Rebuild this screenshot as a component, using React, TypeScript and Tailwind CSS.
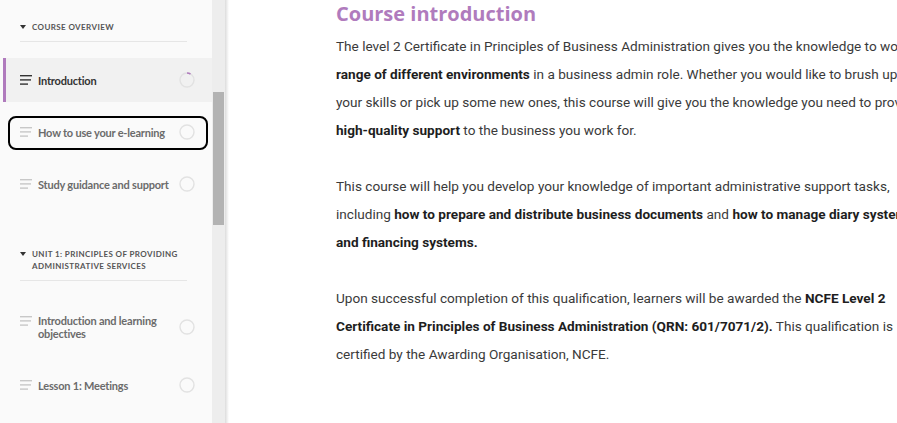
import React from "react";

type Lesson = { title: string[]; active?: boolean; focused?: boolean };

const MenuIcon = ({ active }: { active?: boolean }) => (
  <svg width="12" height="10" viewBox="0 0 12 10" className="shrink-0">
    <g fill={active ? "#333333" : "#c8c8c8"}>
      <rect x="0" y="0" width="12" height="1.4" />
      <rect x="0" y="4.2" width="11" height="1.4" />
      <rect x="0" y="8.4" width="8" height="1.4" />
    </g>
  </svg>
);

const Progress = ({ active }: { active?: boolean }) => (
  <svg width="16" height="16" viewBox="0 0 16 16" className="shrink-0">
    <circle cx="8" cy="8" r="7" fill="none" stroke="#e2e2e2" strokeWidth="1.4" />
    {active && (
      <path d="M8 1 A7 7 0 0 1 11.5 1.94" fill="none" stroke="#b07bbd" strokeWidth="1.6" />
    )}
  </svg>
);

const Row = ({ lesson }: { lesson: Lesson }) => (
  <div
    className={
      "relative mb-2 flex items-center pr-[17px] " +
      (lesson.title.length > 1 ? "h-[56px] " : "h-[44px] ") +
      (lesson.active ? "border-l-[3px] border-[#b07bbd] bg-[#f1f1f1] pl-[14px]" : "pl-[17px]")
    }
  >
    <div className={"flex flex-1 gap-[6px] " + (lesson.title.length > 1 ? "items-start" : "items-center")}>
      <div className={lesson.title.length > 1 ? "pt-[2px]" : ""}>
        <MenuIcon active={lesson.active} />
      </div>
      <div
        className={
          "text-[11px] font-bold leading-[13px] tracking-[-0.2px] " +
          (lesson.active ? "text-[#333]" : "text-[#6b6b6b]")
        }
      >
        {lesson.title.map((t) => (
          <div key={t}>{t}</div>
        ))}
      </div>
    </div>
    <Progress active={lesson.active} />
    {lesson.focused && (
      <div className="pointer-events-none absolute top-[6px] right-[4px] bottom-[4px] left-[5px] rounded-[8px] border-2 border-black" />
    )}
  </div>
);

const SectionHeader = ({ lines }: { lines: string[] }) => (
  <div className="mr-[25px] ml-[17px] border-b border-[#e6e6e6] pb-[8px]">
    <div className="flex items-start gap-[6px] text-[8px] font-bold leading-[12px] tracking-[0.4px] text-[#555]">
      <svg width="6" height="4" viewBox="0 0 6 4" className="mt-[4px] shrink-0">
        <path d="M0 0 H6 L3 4 Z" fill="#333" />
      </svg>
      <div>
        {lines.map((l) => (
          <div key={l}>{l}</div>
        ))}
      </div>
    </div>
  </div>
);

const overview: Lesson[] = [
  { title: ["Introduction"], active: true },
  { title: ["How to use your e-learning"], focused: true },
  { title: ["Study guidance and support"] },
];

const unit1: Lesson[] = [
  { title: ["Introduction and learning", "objectives"] },
  { title: ["Lesson 1: Meetings"] },
];

export default function App() {
  return (
    <div className="flex h-[423px] w-[897px] overflow-hidden bg-white">
      <aside className="w-[212px] shrink-0 bg-[#fafafa] pl-[3px] font-['Lato',sans-serif]">
        <div className="pt-[21px]">
          <SectionHeader lines={["COURSE OVERVIEW"]} />
        </div>
        <div className="mt-[16px]">
          {overview.map((l) => (
            <Row key={l.title[0]} lesson={l} />
          ))}
        </div>
        <div className="pt-[34px]">
          <SectionHeader lines={["UNIT 1: PRINCIPLES OF PROVIDING", "ADMINISTRATIVE SERVICES"]} />
        </div>
        <div className="mt-[18px]">
          {unit1.map((l) => (
            <Row key={l.title[0]} lesson={l} />
          ))}
        </div>
      </aside>
      <div className="w-[13px] shrink-0 bg-[#ededed] pt-[92px] pl-[1px]">
        <div className="h-[133px] w-[11px] bg-[#b3b3b3]" />
      </div>
      <div className="w-[4px] shrink-0 bg-gradient-to-r from-[#dcdcdc] to-white" />
      <main className="min-w-0 flex-1 overflow-hidden pl-[107px]">
        <h1 className="font-['Open_Sans',sans-serif] text-[20px] leading-[28px] font-bold whitespace-nowrap text-[#b07bbd]">
          Course introduction
        </h1>
        <div className="mt-[4px] font-['Roboto',sans-serif] text-[13.6px] leading-[28px] whitespace-nowrap text-[#3a3a3a]">
          <p className="mb-[28px]">
            The level 2 Certificate in Principles of Business Administration gives you the knowledge to work in a wide
            <br />
            <b className="text-[#1e1e1e]">range of different environments</b> in a business admin role. Whether you would like to brush up on
            <br />
            your skills or pick up some new ones, this course will give you the knowledge you need to provide
            <br />
            <b className="text-[#1e1e1e]">high-quality support</b> to the business you work for.
          </p>
          <p className="mb-[28px]">
            This course will help you develop your knowledge of important administrative support tasks,
            <br />
            including <b className="text-[#1e1e1e]">how to prepare and distribute business documents</b> and{" "}
            <b className="text-[#1e1e1e]">how to manage diary systems</b>
            <br />
            <b className="text-[#1e1e1e]">and financing systems.</b>
          </p>
          <p>
            Upon successful completion of this qualification, learners will be awarded the{" "}
            <b className="text-[#1e1e1e]">NCFE Level 2</b>
            <br />
            <b className="text-[#1e1e1e]">Certificate in Principles of Business Administration (QRN: 601/7071/2).</b> This qualification is
            <br />
            certified by the Awarding Organisation, NCFE.
          </p>
        </div>
      </main>
    </div>
  );
}
